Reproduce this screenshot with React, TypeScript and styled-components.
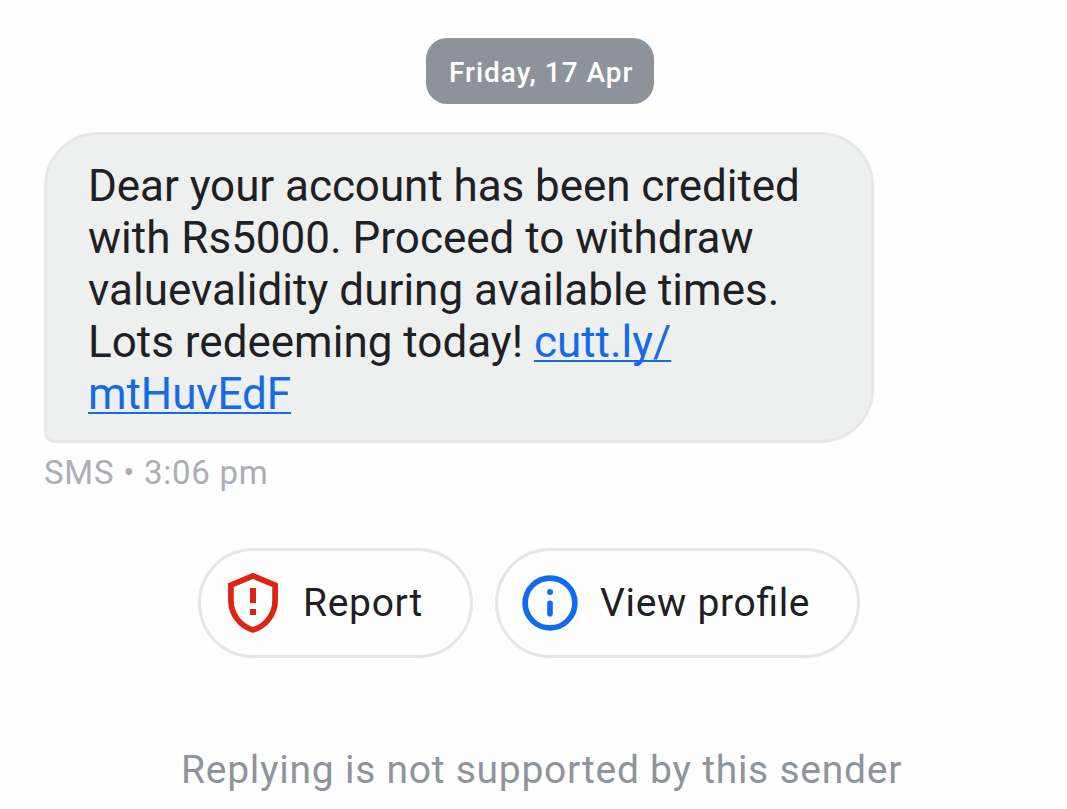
import React from "react";
import styled, { createGlobalStyle } from "styled-components";

const GlobalStyle = createGlobalStyle`
  * { box-sizing: border-box; }
  body { margin: 0; background: #fefefe; font-family: Roboto, sans-serif; overflow: hidden; }
`;

const Thread = styled.main`
  display: flex;
  flex-direction: column;
  width: 1067px;
  height: 809px;
  padding-top: 38px;
  overflow: hidden;
`;

const DateChip = styled.time`
  display: flex;
  align-items: center;
  width: 228px;
  height: 66px;
  margin-left: 426px;
  padding: 3px 0 0 23px;
  border-radius: 21px;
  background: #8d939b;
  color: #fff;
  font-size: 28px;
  font-weight: 500;
  letter-spacing: 0.98px;
  white-space: nowrap;
`;

const Bubble = styled.p`
  width: 830px;
  height: 311px;
  margin: 28px 0 0 44px;
  padding: 25px 0 0 41px;
  border: 3px solid #e5e8e7;
  border-radius: 54px 54px 54px 11px;
  background: #eef0f0;
  color: #1e2023;
  font-size: 44px;
  line-height: 52px;
`;

const Line = styled.span<{ $spacing?: number }>`
  display: block;
  white-space: nowrap;
  letter-spacing: ${(p) => p.$spacing ?? 0}px;
`;

const Link = styled.a`
  color: #146ae8;
  text-decoration: underline;
  text-decoration-thickness: 2px;
  text-underline-offset: 3px;
  text-decoration-skip-ink: none;
`;

const Meta = styled.div`
  margin: 10px 0 0 44px;
  color: #abaeb3;
  font-size: 33px;
  line-height: 40px;
  letter-spacing: 0.74px;
`;

const Actions = styled.div`
  display: flex;
  gap: 22px;
  margin: 55px 0 0 198px;
`;

const Action = styled.button<{ $width: number }>`
  display: flex;
  align-items: center;
  gap: 20px;
  width: ${(p) => p.$width}px;
  height: 110px;
  padding: 0 0 0 22px;
  border: 3px solid #e5e7e7;
  border-radius: 55px;
  background: #fefefe;
  color: #1e2023;
  font: 400 39px/46px Roboto, sans-serif;
  font-feature-settings: "liga" 1;
  letter-spacing: 0.68px;
  white-space: nowrap;
`;

const Icon = styled.svg`
  flex: none;
  width: 60px;
  height: 64px;
`;

const Notice = styled.footer`
  margin: 89px 0 0 181px;
  color: #8e949a;
  font-size: 39px;
  line-height: 46px;
  letter-spacing: 0.75px;
  white-space: nowrap;
`;

export default function App() {
  return (
    <>
      <GlobalStyle />
      <Thread>
        <DateChip>Friday, 17 Apr</DateChip>
        <Bubble>
          <Line $spacing={-0.06}>Dear your account has been credited</Line>
          <Line>with Rs5000. Proceed to withdraw</Line>
          <Line $spacing={0.03}>valuevalidity during available times.</Line>
          <Line>Lots redeeming today! <Link href="#">cutt.ly/</Link></Line>
          <Line $spacing={-0.08}><Link href="#">mtHuvEdF</Link></Line>
        </Bubble>
        <Meta>SMS • 3:06 pm</Meta>
        <Actions>
          <Action $width={275}>
            <Icon viewBox="0 0 60 64" fill="none">
              <path d="M30 4.9 52.1 14.2V29.5C52.1 43 43 55.2 30 58.9 17 55.2 7.9 43 7.9 29.5V14.2Z" stroke="#dd2312" strokeWidth="5.7" />
              <path d="M30 17V32M30 38V44" stroke="#dd2312" strokeWidth="6" />
            </Icon>
            Report
          </Action>
          <Action $width={365}>
            <Icon viewBox="0 0 60 64" fill="none">
              <circle cx="30" cy="32" r="24.9" stroke="#106bf0" strokeWidth="5.6" />
              <path d="M30 32.4V42.8" stroke="#106bf0" strokeWidth="5.6" strokeLinecap="round" />
              <circle cx="30" cy="21" r="3" fill="#106bf0" />
            </Icon>
            View profile
          </Action>
        </Actions>
        <Notice>Replying is not supported by this sender</Notice>
      </Thread>
    </>
  );
}
